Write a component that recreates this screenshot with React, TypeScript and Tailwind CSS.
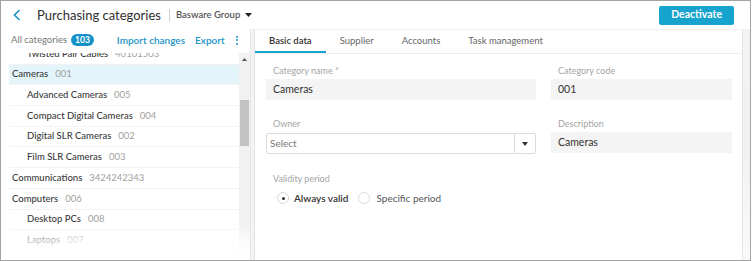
import React from "react";

type Row = { name: string; code: string; child?: boolean; selected?: boolean };

const rows: Row[] = [
  { name: "Twisted Pair Cables", code: "40101503", child: true },
  { name: "Cameras", code: "001", selected: true },
  { name: "Advanced Cameras", code: "005", child: true },
  { name: "Compact Digital Cameras", code: "004", child: true },
  { name: "Digital SLR Cameras", code: "002", child: true },
  { name: "Film SLR Cameras", code: "003", child: true },
  { name: "Communications", code: "3424242343" },
  { name: "Computers", code: "006" },
  { name: "Desktop PCs", code: "008", child: true },
  { name: "Laptops", code: "007", child: true },
  { name: "Servers", code: "009", child: true },
];

function Field({ label, value }: { label: string; value: string }) {
  return (
    <div className="flex flex-col">
      <div className="h-[14px] pl-[7px] text-[9px] leading-[14px] text-[#a5a5a5]">{label}</div>
      <div className="mt-px flex h-[21px] items-center bg-[#f4f4f4] pl-[7px] text-[10.5px] text-[#333]">
        {value}
      </div>
    </div>
  );
}

export default function App() {
  return (
    <div
      className="flex h-[261px] w-[751px] flex-col border border-[#a3a3a3] bg-white text-[#333]"
      style={{ fontFamily: "Lato, 'Noto Sans', sans-serif" }}
    >
      {/* Header */}
      <div className="flex h-[28px] shrink-0 items-center">
        <svg className="ml-[12px]" width="8" height="12" viewBox="0 0 8 12">
          <path d="M6.5 1 L1.5 6 L6.5 11" fill="none" stroke="#1a93c7" strokeWidth="1.6" />
        </svg>
        <div className="ml-[16px] text-[13px] leading-none text-[#2f2f2f]">Purchasing categories</div>
        <div className="ml-[8px] h-[13px] w-px bg-[#d2d2d2]" />
        <div className="ml-[6px] text-[9.5px] font-semibold leading-none text-[#555]">Basware Group</div>
        <svg className="ml-[5px]" width="7" height="4" viewBox="0 0 7 4">
          <path d="M0 0 H7 L3.5 4 Z" fill="#222" />
        </svg>
        <button className="ml-auto mr-[16px] flex h-[19px] items-center rounded-[2px] bg-[#16a4cf] px-[12px] text-[10.5px] font-bold text-white">
          Deactivate
        </button>
      </div>

      {/* Content */}
      <div className="flex min-h-0 flex-1">
        {/* Left panel */}
        <div className="flex w-[250px] shrink-0 flex-col border-r border-[#e6e6e6]">
          <div className="flex h-[24px] shrink-0 items-center pb-[2px]">
            <span className="pl-[10px] text-[9.5px] leading-none text-[#777]">All categories</span>
            <span className="ml-[4px] flex h-[12px] items-center rounded-full bg-[#1592c8] px-[4px] text-[8.5px] font-bold leading-none text-white">
              103
            </span>
            <span className="ml-[23px] text-[10px] font-semibold leading-none text-[#1a93c7]">Import changes</span>
            <span className="ml-[10px] text-[10px] font-semibold leading-none text-[#1a93c7]">Export</span>
            <span className="ml-auto mr-[12px] flex flex-col gap-[1.5px]">
              <span className="h-[2px] w-[2px] rounded-full bg-[#1a93c7]" />
              <span className="h-[2px] w-[2px] rounded-full bg-[#1a93c7]" />
              <span className="h-[2px] w-[2px] rounded-full bg-[#1a93c7]" />
            </span>
          </div>
          <div className="relative flex min-h-0 flex-1">
            <div className="min-w-0 flex-1 overflow-hidden pl-[8px]">
              <div className="-mt-[9px]">
                {rows.map((r) => (
                  <div
                    key={r.name}
                    className={
                      "flex h-[20.7px] items-center border-b border-[#f3f3f3] text-[9.5px] " +
                      (r.selected ? "bg-[#e3f4fb] " : "") +
                      (r.child ? "pl-[18px]" : "pl-[3px]")
                    }
                  >
                    <span className="font-medium text-[#3a3a3a]">{r.name}</span>
                    <span className="ml-[7px] text-[#a0a0a0]">{r.code}</span>
                  </div>
                ))}
              </div>
            </div>
            <div className="flex w-[11px] shrink-0 flex-col bg-[#f1f1f1]">
              <div className="flex h-[12px] items-center justify-center pt-[1px]">
                <svg width="5" height="3" viewBox="0 0 5 3">
                  <path d="M0 3 L2.5 0 L5 3 Z" fill="#555" />
                </svg>
              </div>
              <div className="mx-[1px] mt-[35px] h-[46px] bg-[#c2c2c2]" />
            </div>
            <div className="pointer-events-none absolute bottom-0 left-0 right-0 h-[38px] bg-linear-to-t from-white via-white/70 to-transparent" />
          </div>
        </div>

        {/* Gap */}
        <div className="w-[4px] shrink-0 border-r border-[#e2e2e2] bg-[#f4f4f4]" />

        {/* Right panel */}
        <div className="flex min-w-0 flex-1 flex-col border-t border-[#f0f0f0]">
          <div className="flex h-[24px] shrink-0 border-b border-[#eeeeee]">
            {[
              { t: "Basic data", a: true },
              { t: "Supplier" },
              { t: "Accounts" },
              { t: "Task management" },
            ].map((tab) => (
              <div
                key={tab.t}
                className={
                  "flex items-center px-[14px] text-[9.5px] " +
                  (tab.a
                    ? "border-b-2 border-[#1aa3cf] pt-[2px] font-semibold text-[#333]"
                    : "text-[#666]")
                }
              >
                {tab.t}
              </div>
            ))}
          </div>

          <div className="pl-[11px] pt-[10px]">
            <div className="grid grid-cols-[270px_181px] gap-x-[15px] gap-y-[17px]">
              <Field label="Category name *" value="Cameras" />
              <Field label="Category code" value="001" />
              <div className="flex flex-col">
                <div className="h-[14px] pl-[7px] text-[9px] leading-[14px] text-[#a5a5a5]">Owner</div>
                <div className="mt-[2px] flex h-[21px] items-stretch rounded-[2px] border border-[#dcdcdc] bg-white">
                  <div className="flex flex-1 items-center pl-[3px] text-[10px] text-[#777]">Select</div>
                  <div className="flex w-[21px] items-center justify-center border-l border-[#dcdcdc]">
                    <svg width="6" height="4" viewBox="0 0 6 4">
                      <path d="M0 0 H6 L3 4 Z" fill="#333" />
                    </svg>
                  </div>
                </div>
              </div>
              <Field label="Description" value="Cameras" />
            </div>

            <div className="mt-[18px] h-[14px] pl-[7px] text-[9px] leading-[14px] text-[#a5a5a5]">
              Validity period
            </div>
            <div className="mt-[3px] flex h-[18px] items-center pl-[11px]">
              <span className="flex h-[12px] w-[12px] items-center justify-center rounded-full border border-[#dadada] bg-white">
                <span className="h-[3px] w-[3px] rounded-full bg-[#333]" />
              </span>
              <span className="ml-[5px] text-[10px] font-semibold text-[#333]">Always valid</span>
              <span className="ml-[10px] h-[12px] w-[12px] rounded-full border border-[#dadada] bg-white" />
              <span className="ml-[6px] text-[10px] text-[#555]">Specific period</span>
            </div>
          </div>
        </div>

        {/* Right edge strip */}
        <div className="w-[8px] shrink-0 border-l border-[#e6e6e6] bg-linear-to-b from-[#f3f3f3] via-[#f1f1f1] to-[#fafafa]" />
      </div>
    </div>
  );
}
